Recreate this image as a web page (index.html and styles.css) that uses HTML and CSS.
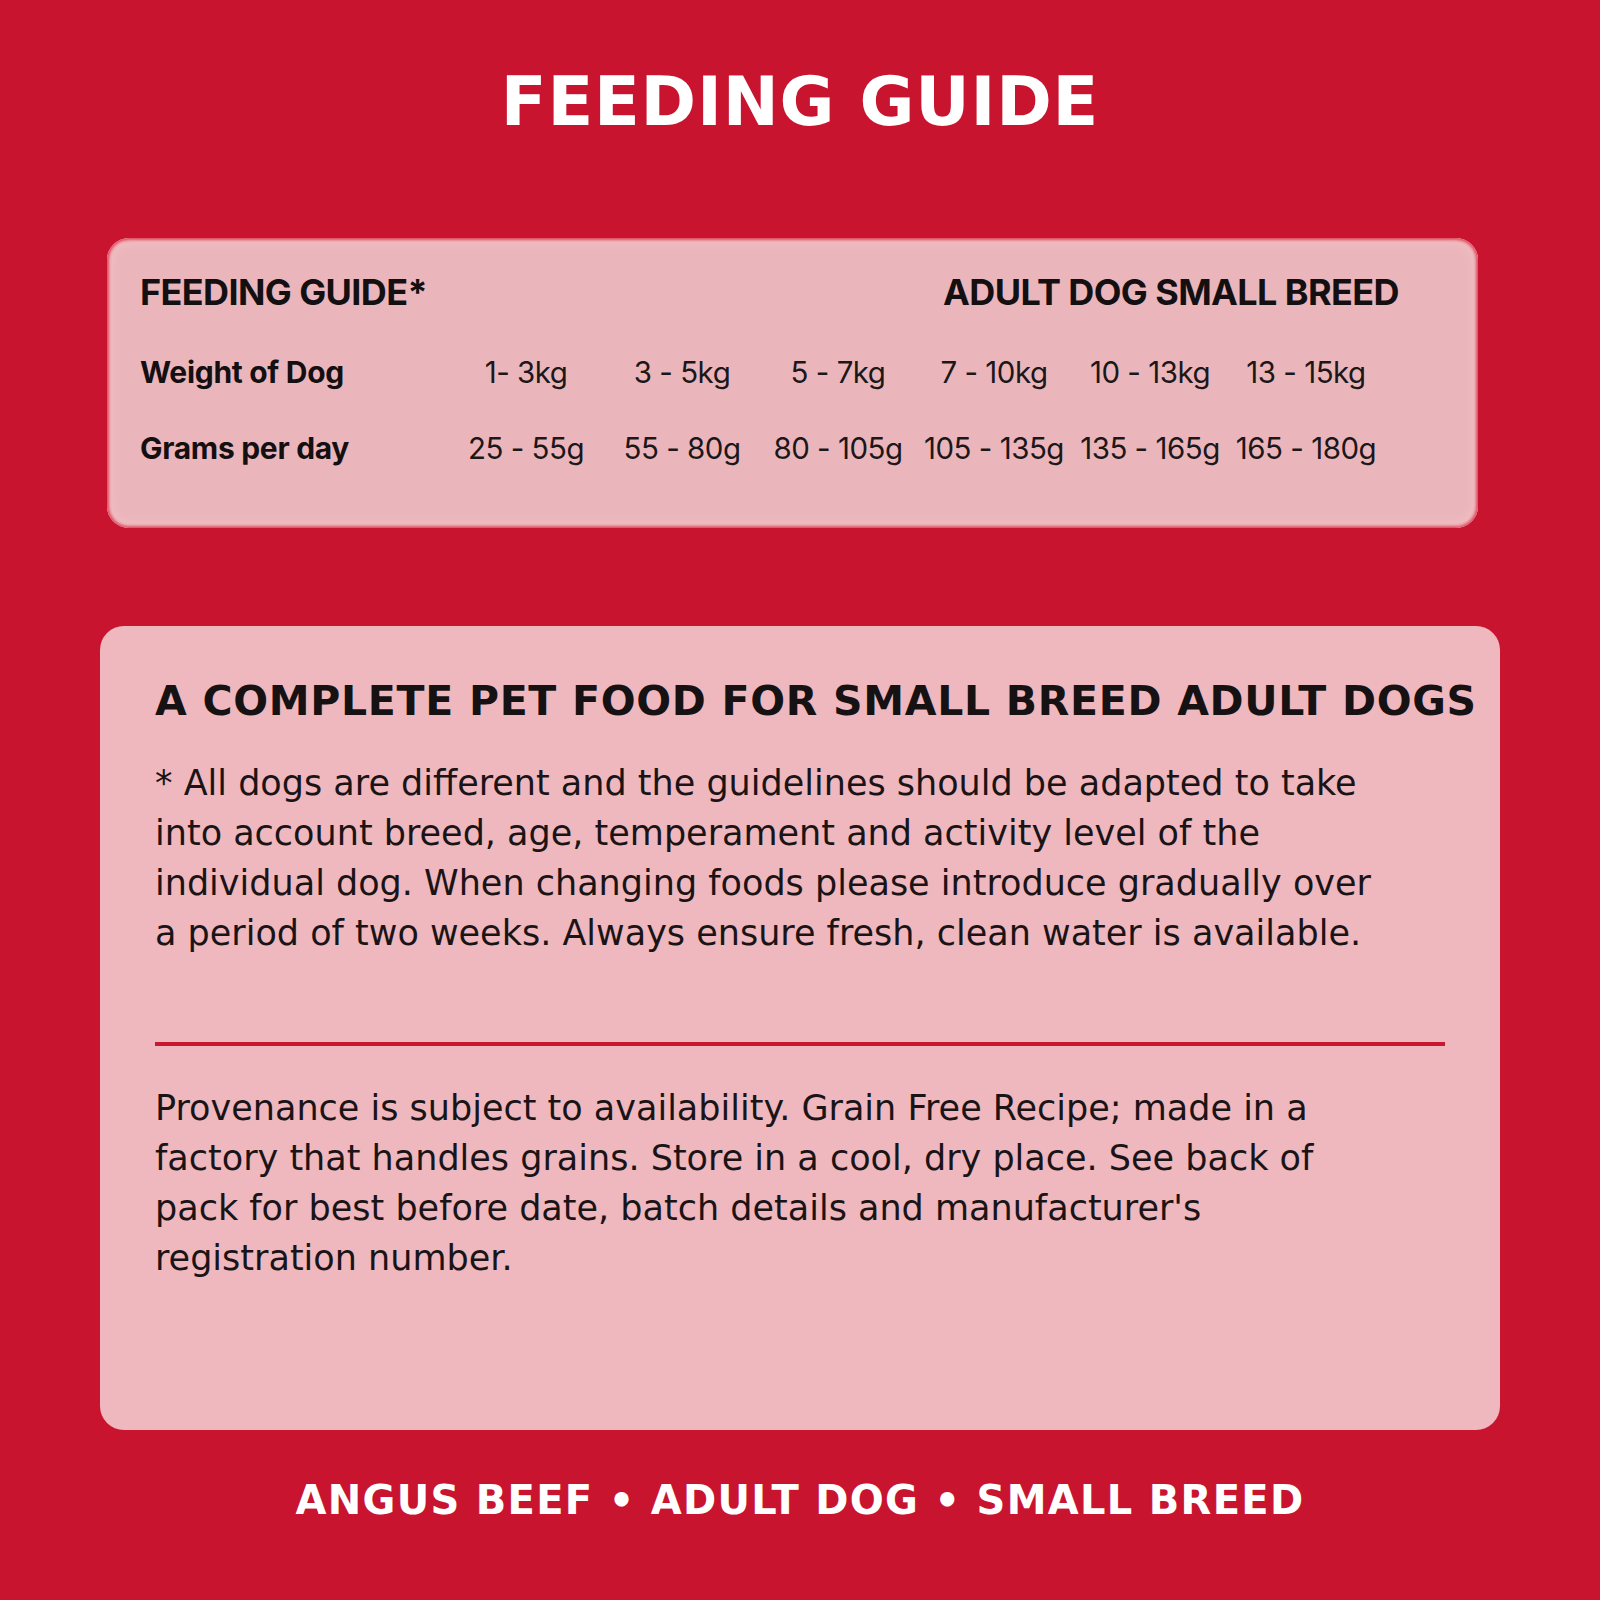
FILE: index.html
```html
<!DOCTYPE html>
<html lang="en">
<head>
<meta charset="utf-8">
<title>Feeding Guide</title>
<link rel="stylesheet" href="styles.css">
</head>
<body>
<main class="page">
  <h1 class="title">FEEDING GUIDE</h1>

  <section class="guide-card">
    <div class="guide-head">
      <span class="guide-name">FEEDING GUIDE*</span>
      <span class="guide-kind">ADULT DOG SMALL BREED</span>
    </div>
    <div class="guide-table">
      <span class="row-label">Weight of Dog</span>
      <span class="cell">1- 3kg</span>
      <span class="cell">3 - 5kg</span>
      <span class="cell">5 - 7kg</span>
      <span class="cell">7 - 10kg</span>
      <span class="cell">10 - 13kg</span>
      <span class="cell">13 - 15kg</span>
      <span class="row-label">Grams per day</span>
      <span class="cell">25 - 55g</span>
      <span class="cell">55 - 80g</span>
      <span class="cell">80 - 105g</span>
      <span class="cell">105 - 135g</span>
      <span class="cell">135 - 165g</span>
      <span class="cell">165 - 180g</span>
    </div>
  </section>

  <section class="info-card">
    <h2 class="info-heading">A COMPLETE PET FOOD FOR SMALL BREED ADULT DOGS</h2>
    <p class="info-text">* All dogs are different and the guidelines should be adapted to take into account breed, age, temperament and activity level of the individual dog. When changing foods please introduce gradually over a period of two weeks. Always ensure fresh, clean water is available.</p>
    <hr class="divider">
    <p class="info-text">Provenance is subject to availability. Grain Free Recipe; made in a factory that handles grains. Store in a cool, dry place. See back of pack for best before date, batch details and manufacturer's registration number.</p>
  </section>

  <footer class="tagline">ANGUS BEEF &bull; ADULT DOG &bull; SMALL BREED</footer>
</main>
</body>
</html>
```

FILE: styles.css
```css
html, body {
  margin: 0;
  padding: 0;
}

body {
  background: #c8142f;
  font-family: "DejaVu Sans", sans-serif;
  width: 1600px;
  height: 1600px;
  overflow: hidden;
}

.page {
  display: flex;
  flex-direction: column;
  align-items: center;
  padding-top: 62px;
}

.title {
  margin: 0;
  color: #ffffff;
  font-size: 67px;
  line-height: 80px;
  font-weight: 700;
  letter-spacing: 0.8px;
  text-align: center;
}

.guide-card {
  box-sizing: border-box;
  width: 1371px;
  height: 290px;
  margin-top: 96px;
  align-self: flex-start;
  margin-left: 107px;
  padding: 32px 78px 0 33px;
  background: #ebb6bb;
  border-radius: 22px;
  box-shadow: inset 0 0 3px 2px #e04a5e, inset 0 0 8px 5px #f0c0c5;
  font-family: Inter, "Liberation Sans", sans-serif;
  color: #141012;
}

.guide-head {
  display: flex;
  justify-content: space-between;
  align-items: baseline;
  font-size: 36px;
  line-height: 44px;
  font-weight: 700;
  letter-spacing: -0.6px;
  margin-right: 1px;
}

.guide-table {
  display: grid;
  grid-template-columns: 308px repeat(6, 156px);
  row-gap: 42px;
  margin-top: 41px;
  line-height: 34px;
}

.row-label {
  font-size: 30px;
  font-weight: 700;
  letter-spacing: -0.3px;
}

.cell {
  font-size: 29.5px;
  text-align: center;
  font-weight: 400;
  letter-spacing: -0.5px;
  color: #1c1719;
}

.info-card {
  box-sizing: border-box;
  width: 1400px;
  height: 804px;
  margin-top: 98px;
  padding: 51px 55px 0 55px;
  background: #efb8be;
  border-radius: 24px;
  color: #1b1416;
}

.info-heading {
  margin: 0;
  font-size: 41px;
  line-height: 48px;
  font-weight: 700;
  letter-spacing: 0.7px;
  white-space: nowrap;
  color: #161213;
}

.info-text {
  margin: 33px 0 0 0;
  max-width: 1230px;
  font-size: 35px;
  line-height: 50px;
  font-weight: 400;
}

.divider {
  margin: 84px 0 0 0;
  height: 4px;
  border: 0;
  background: #c8182f;
}

.info-card .divider + .info-text {
  margin-top: 37px;
}

.tagline {
  margin-top: 46px;
  color: #ffffff;
  font-size: 40px;
  line-height: 48px;
  font-weight: 700;
  letter-spacing: 1.3px;
  text-align: center;
}
```
